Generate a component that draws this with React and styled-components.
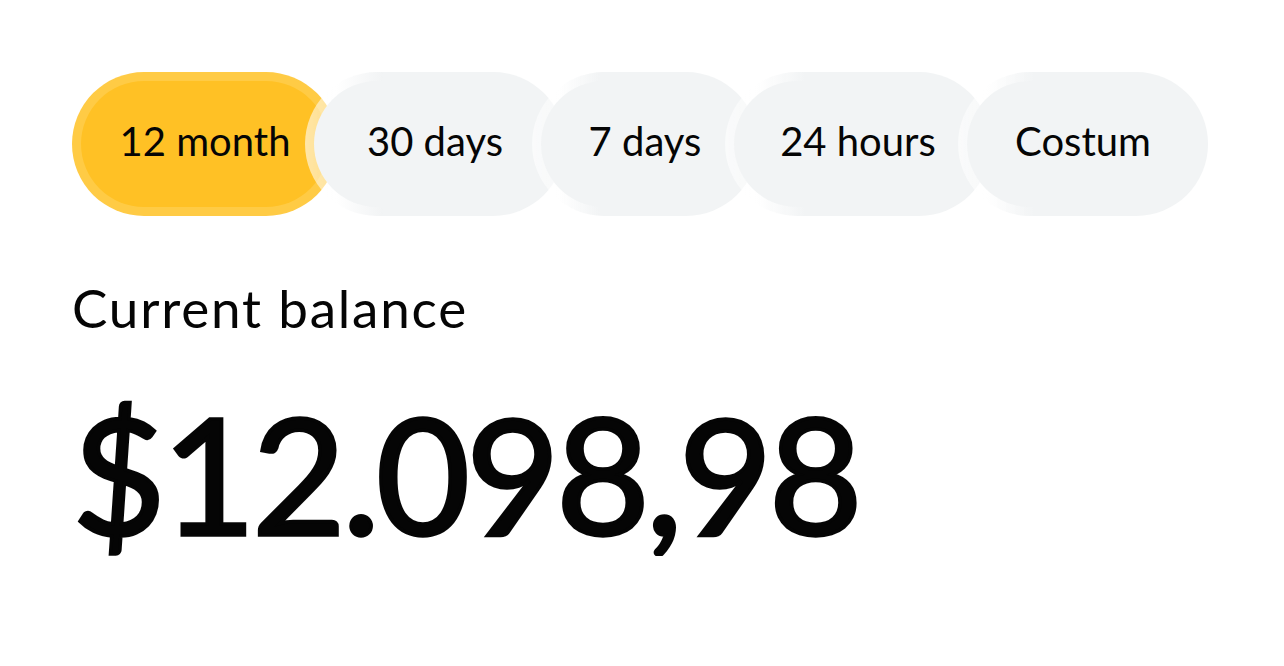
import styled, { createGlobalStyle } from "styled-components";

const GlobalStyle = createGlobalStyle`
  body {
    margin: 0;
    background: #ffffff;
    font-family: Lato, "Noto Sans", sans-serif;
    color: #050505;
  }
`

const periods = [
    { label: "12 month", width: 266 },
    { label: "30 days", width: 260 },
    { label: "7 days", width: 226 },
    { label: "24 hours", width: 266 },
    { label: "Costum", width: 250 },
]

function App() {
    const active = "12 month"

    return (
        <Page>
            <GlobalStyle />
            <PillRow>
                {periods.map((p) => (
                    <Pill key={p.label} $active={p.label === active} style={{ width: p.width }}>
                        {p.label}
                    </Pill>
                ))}
            </PillRow>
            <Label>Current balance</Label>
            <Balance>$12.098,98</Balance>
        </Page>
    )
}

const Page = styled.div`
    display: flex;
    flex-direction: column;
    align-items: flex-start;
    padding: 72px 0 0 72px;
`

const PillRow = styled.div`
    display: flex;
    align-items: center;
`

const Pill = styled.button`
    flex: none;
    height: 144px;
    box-sizing: border-box;
    padding: 0 0 6px;
    border-radius: 72px;
    border: 9px solid transparent;
    background: ${p => p.$active
        ? "linear-gradient(#FFC125, #FFC125) padding-box, linear-gradient(#FFCB45, #FFCB45) border-box"
        : "linear-gradient(#F2F4F5, #F2F4F5) padding-box, linear-gradient(to right, rgba(255, 255, 255, 0.6), rgba(255, 255, 255, 0.45) 12%, #F2F4F5 30%) border-box"};
    font-family: Lato, "Noto Sans", sans-serif;
    font-size: 40px;
    color: #050505;
    text-align: center;
    white-space: nowrap;
    cursor: pointer;
    & + & {
        margin-left: -33px;
    }
`

const Label = styled.div`
    margin-top: 62px;
    font-size: 53px;
    line-height: 60px;
    letter-spacing: 1.8px;
`

const Balance = styled.div`
    margin-top: 52px;
    font-size: 162px;
    line-height: 166px;
    font-weight: 400;
    -webkit-text-stroke: 3.5px currentColor;
    letter-spacing: -4px;
`

export default App
